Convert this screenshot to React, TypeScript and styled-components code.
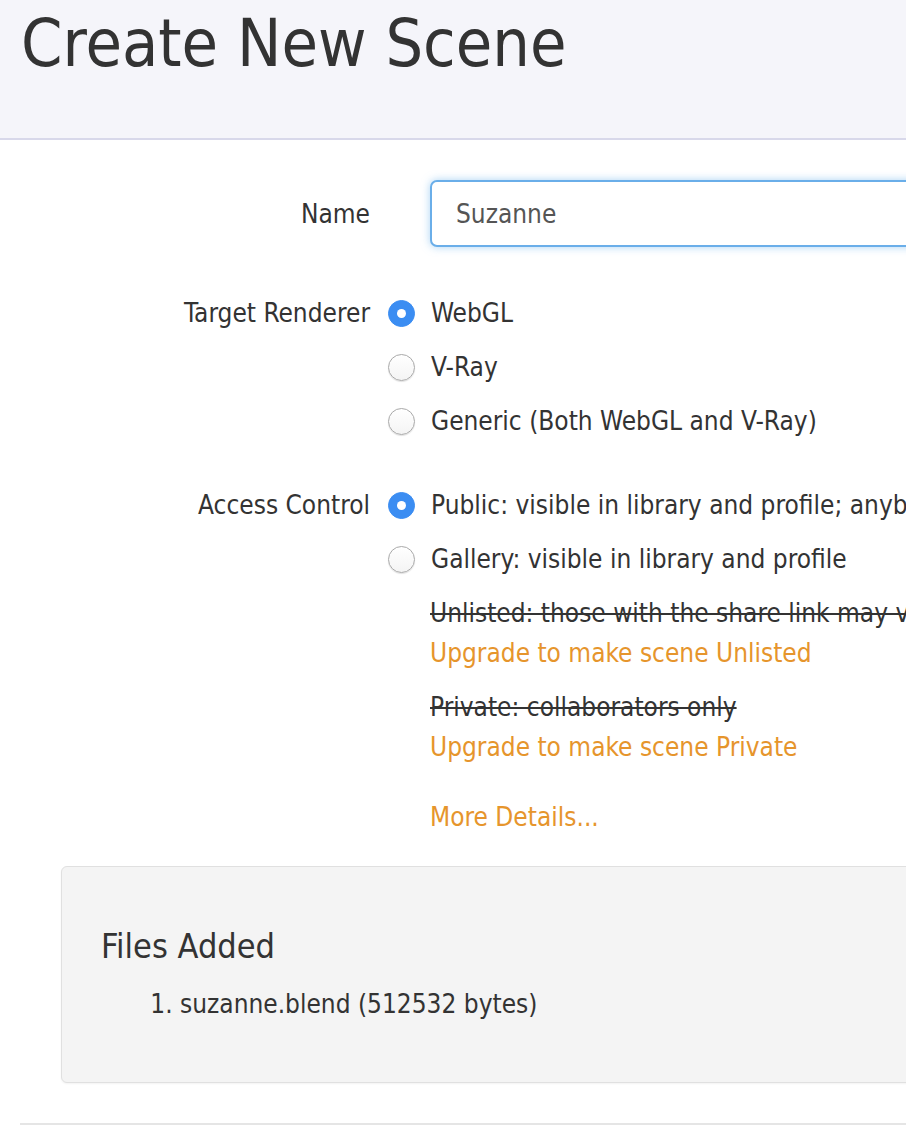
import React from "react";
import styled, { createGlobalStyle } from "styled-components";

const GlobalStyle = createGlobalStyle`
  html, body {
    margin: 0;
    padding: 0;
    background: #ffffff;
    overflow: hidden;
  }
  body {
    font-family: "DejaVu Sans Condensed", "Liberation Sans", sans-serif;
    color: #333333;
  }
  * { box-sizing: border-box; }
`;

const Page = styled.div`
  width: 1300px;
`;

const Header = styled.header`
  height: 140px;
  background: #f5f5fa;
  border-bottom: 2px solid #d8d8ea;
  padding: 11px 0 0 21px;
`;

const Title = styled.h1`
  margin: 0;
  font-size: 66px;
  line-height: 66px;
  font-weight: 400;
  color: #333333;
`;

const Form = styled.form`
  padding: 40px 0 0 0;
  display: flex;
  flex-direction: column;
`;

const Row = styled.div<{ $gap: number; $center?: boolean }>`
  display: grid;
  grid-template-columns: 370px 1fr;
  column-gap: 18px;
  align-items: ${(p) => (p.$center ? "center" : "start")};
  margin-bottom: ${(p) => p.$gap}px;
`;

const Label = styled.label`
  text-align: right;
  font-size: 26px;
  line-height: 54px;
  color: #333333;
`;

const TextInput = styled.input`
  margin-left: 42px;
  width: 900px;
  height: 67px;
  border: 2px solid #6aaee9;
  border-radius: 7px;
  box-shadow: 0 0 8px rgba(102, 175, 233, 0.55);
  padding: 0 24px;
  font-family: inherit;
  font-size: 26px;
  color: #555555;
  outline: none;
`;

const Options = styled.div`
  display: flex;
  flex-direction: column;
`;

const OptionRow = styled.label`
  display: flex;
  align-items: center;
  gap: 16px;
  height: 54px;
  font-size: 26px;
  white-space: nowrap;
  color: #333333;
`;

const Radio = styled.span<{ $checked?: boolean }>`
  flex: none;
  width: 27px;
  height: 27px;
  border-radius: 50%;
  display: flex;
  align-items: center;
  justify-content: center;
  background: ${(p) => (p.$checked ? "#3b8df2" : "linear-gradient(#ffffff, #f4f4f4)")};
  border: 1px solid ${(p) => (p.$checked ? "#3b8df2" : "#a9a9a9")};
  box-shadow: ${(p) => (p.$checked ? "none" : "0 1px 1px rgba(0,0,0,0.12)")};

  &::after {
    content: "";
    width: 9px;
    height: 9px;
    border-radius: 50%;
    background: #ffffff;
    display: ${(p) => (p.$checked ? "block" : "none")};
  }
`;

const Locked = styled.div<{ $top: number }>`
  margin-left: 42px;
  margin-top: ${(p) => p.$top}px;
  display: flex;
  flex-direction: column;
`;

const Struck = styled.span`
  font-size: 26px;
  line-height: 40px;
  text-decoration: line-through;
  white-space: nowrap;
  color: #333333;
`;

const OrangeLink = styled.a`
  font-size: 26px;
  line-height: 40px;
  color: #e6952c;
  text-decoration: none;
  white-space: nowrap;
  cursor: pointer;
`;

const Panel = styled.section`
  margin: 29px 0 0 61px;
  width: 1100px;
  height: 217px;
  background: #f4f4f4;
  border: 1px solid #e0e0e0;
  border-radius: 6px;
  box-shadow: 0 1px 2px rgba(0, 0, 0, 0.05);
  padding: 57px 0 0 39px;
`;

const PanelTitle = styled.h3`
  margin: 0;
  font-size: 34px;
  line-height: 44px;
  font-weight: 400;
  color: #333333;
`;

const FileList = styled.ol`
  margin: 16px 0 0 0;
  padding-left: 79px;
  font-size: 26px;
  line-height: 40px;
  color: #333333;
`;

const Rule = styled.hr`
  margin: 40px 0 0 20px;
  width: 1200px;
  border: none;
  border-top: 2px solid #e5e5e5;
`;

export default function App() {
  return (
    <>
      <GlobalStyle />
      <Page>
        <Header>
          <Title>Create New Scene</Title>
        </Header>
        <Form>
          <Row $gap={39} $center>
            <Label>Name</Label>
            <TextInput defaultValue="Suzanne" />
          </Row>
          <Row $gap={30}>
            <Label>Target Renderer</Label>
            <Options>
              <OptionRow>
                <Radio $checked />
                WebGL
              </OptionRow>
              <OptionRow>
                <Radio />
                V-Ray
              </OptionRow>
              <OptionRow>
                <Radio />
                Generic (Both WebGL and V-Ray)
              </OptionRow>
            </Options>
          </Row>
          <Row $gap={0}>
            <Label>Access Control</Label>
            <Options>
              <OptionRow>
                <Radio $checked />
                Public: visible in library and profile; anybody may view
              </OptionRow>
              <OptionRow>
                <Radio />
                Gallery: visible in library and profile
              </OptionRow>
              <Locked $top={7}>
                <Struck>Unlisted: those with the share link may view</Struck>
                <OrangeLink>Upgrade to make scene Unlisted</OrangeLink>
              </Locked>
              <Locked $top={14}>
                <Struck>Private: collaborators only</Struck>
                <OrangeLink>Upgrade to make scene Private</OrangeLink>
              </Locked>
              <Locked $top={30}>
                <OrangeLink>More Details...</OrangeLink>
              </Locked>
            </Options>
          </Row>
        </Form>
        <Panel>
          <PanelTitle>Files Added</PanelTitle>
          <FileList>
            <li>suzanne.blend (512532 bytes)</li>
          </FileList>
        </Panel>
        <Rule />
      </Page>
    </>
  );
}
